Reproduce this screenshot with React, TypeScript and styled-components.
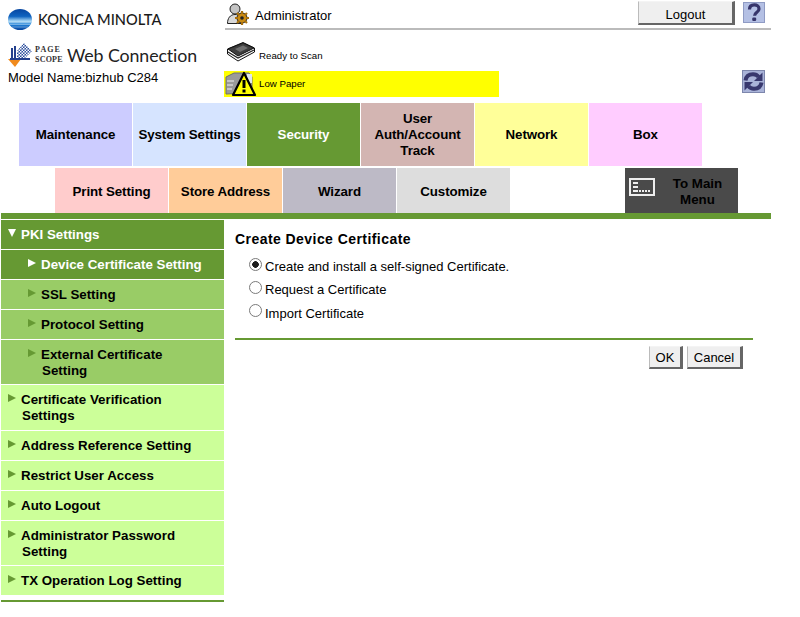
import React from "react";
import styled, { createGlobalStyle } from "styled-components";

const GlobalStyle = createGlobalStyle`
  html, body {
    margin: 0;
    padding: 0;
    background: #fff;
  }
  body {
    font-family: "Liberation Sans", Arial, sans-serif;
    color: #000;
  }
`;

const Page = styled.div`
  width: 800px;
  height: 617px;
  overflow: hidden;
`;

const Header = styled.header`
  display: grid;
  grid-template-columns: 225px 546px;
  height: 103px;
`;

const Brand = styled.div`
  display: flex;
  flex-direction: column;
  padding: 9px 0 0 8px;
`;

const CompanyLogo = styled.div`
  display: flex;
  align-items: center;
  gap: 6px;
  height: 21px;
`;

const CompanyName = styled.span`
  font-family: Lato, sans-serif;
  font-size: 14.6px;
  font-weight: 500;
  color: #1a1a1a;
  white-space: nowrap;
`;

const ProductLogo = styled.div`
  display: flex;
  align-items: center;
  height: 25px;
  margin-top: 12px;
`;

const ScopeWords = styled.div`
  display: flex;
  flex-direction: column;
  width: 27px;
  font-family: "Liberation Serif", serif;
  font-weight: 700;
  font-size: 8px;
  line-height: 10px;
  color: #333;
`;

const ScopeWord = styled.span<{ $spacing: number }>`
  letter-spacing: ${(p) => p.$spacing}px;
`;

const ProductName = styled.span`
  font-family: Lato, sans-serif;
  font-size: 17.8px;
  letter-spacing: -0.1px;
  margin-left: 5px;
  color: #222;
  white-space: nowrap;
`;

const ModelName = styled.div`
  font-size: 13px;
  line-height: 16px;
  margin-top: 3px;
  white-space: nowrap;
`;

const Status = styled.div`
  display: flex;
  flex-direction: column;
`;

const UserBar = styled.div`
  display: flex;
  align-items: center;
  height: 28px;
  padding-left: 2px;
  border-bottom: 2px solid #bbb;
`;

const UserName = styled.span`
  font-size: 13px;
  margin-left: 6px;
  margin-top: 2px;
`;

const PushButton = styled.button<{ $width: number; $height: number; $drop: number }>`
  width: ${(p) => p.$width}px;
  height: ${(p) => p.$height}px;
  padding: ${(p) => p.$drop}px 0 0;
  background: #efefef;
  border-style: solid;
  border-width: 1px 3px 2px 1px;
  border-color: #f4f4f4 #666 #666 #bbb;
  font-family: "Liberation Sans", Arial, sans-serif;
  font-size: 13px;
  color: #000;
`;

const LogoutSlot = styled.div`
  margin-left: auto;
  margin-top: -2px;
`;

const HelpSlot = styled.div`
  display: flex;
  margin: -4px 6px 0 8px;
`;

const DeviceRow = styled.div`
  display: flex;
  align-items: flex-start;
  height: 29px;
  padding: 12px 0 0 2px;
`;

const DeviceLabel = styled.span`
  font-size: 9.7px;
  line-height: 12px;
  margin: 8px 0 0 4px;
`;

const AlertRow = styled.div`
  display: flex;
  align-items: center;
`;

const AlertBox = styled.div`
  display: flex;
  align-items: center;
  width: 275px;
  height: 26px;
  margin-left: -1px;
  padding-left: 1px;
  box-sizing: border-box;
  background: #ffff00;
`;

const AlertLabel = styled.span`
  font-size: 9.7px;
  margin: 0 0 2px 2px;
`;

const RefreshSlot = styled.div`
  display: flex;
  margin: -5px 6px 0 auto;
`;

const TabRow = styled.nav<{ $indent: number; $height: number; $top: number }>`
  display: flex;
  gap: 1px;
  height: ${(p) => p.$height}px;
  margin-top: ${(p) => p.$top}px;
  padding-left: ${(p) => p.$indent}px;
`;

const Tab = styled.div<{ $bg: string; $light?: boolean; $drop: number }>`
  display: flex;
  align-items: center;
  justify-content: center;
  width: 113px;
  box-sizing: border-box;
  padding: ${(p) => p.$drop}px 3px 0;
  text-align: center;
  font-size: 13.33px;
  font-weight: 700;
  line-height: 16px;
  letter-spacing: -0.1px;
  background: ${(p) => p.$bg};
  color: ${(p) => (p.$light ? "#fff" : "#000")};
`;

const MainMenuTab = styled.div`
  display: flex;
  align-items: flex-start;
  width: 113px;
  margin-left: 114px;
  padding: 10px 0 0 4px;
  box-sizing: border-box;
  background: #4a4a4a;
  color: #000;
  font-size: 13.33px;
  font-weight: 700;
  line-height: 16px;
`;

const MainMenuLabel = styled.span`
  flex: 1;
  text-align: center;
  padding-left: 2px;
  margin-top: -2px;
`;

const GreenBar = styled.div`
  width: 770px;
  height: 6px;
  margin-left: 1px;
  background: #669933;
`;

const Body = styled.div`
  display: grid;
  grid-template-columns: 223px 1fr;
  margin-top: 1px;
  padding-left: 1px;
`;

const Side = styled.aside`
  display: flex;
  flex-direction: column;
  gap: 1px;
`;

const SideItem = styled.div<{ $bg: string; $light?: boolean; $indent: number; $tall?: boolean }>`
  display: flex;
  align-items: flex-start;
  box-sizing: border-box;
  min-height: 29px;
  padding: 7px 0 ${(p) => (p.$tall ? 6 : 5)}px ${(p) => p.$indent}px;
  background: ${(p) => p.$bg};
  color: ${(p) => (p.$light ? "#fff" : "#000")};
  font-size: 13.33px;
  font-weight: 700;
  line-height: 16px;
`;

const Arrow = styled.span<{ $down?: boolean; $color: string }>`
  flex: none;
  width: 0;
  height: 0;
  margin-top: 2px;
  margin-right: 5px;
  ${(p) =>
    p.$down
      ? `border-left: 4px solid transparent;
         border-right: 4px solid transparent;
         border-top: 8px solid ${p.$color};`
      : `border-top: 4px solid transparent;
         border-bottom: 4px solid transparent;
         border-left: 8px solid ${p.$color};`}
`;

const SideText = styled.span`
  text-indent: -1px;
  padding-left: 1px;
`;

const SideEnd = styled.div`
  height: 2px;
  margin-top: 4px;
  background: #669933;
`;

const Content = styled.main`
  display: flex;
  flex-direction: column;
  width: 518px;
  margin-left: 11px;
`;

const Title = styled.h2`
  margin: 11px 0 0;
  font-size: 14px;
  line-height: 17px;
  font-weight: 700;
  letter-spacing: 0.44px;
`;

const Options = styled.div`
  display: flex;
  flex-direction: column;
  padding: 7px 0 0 14px;
`;

const OptionRow = styled.label<{ $height: number }>`
  display: flex;
  align-items: center;
  height: ${(p) => p.$height}px;
  font-size: 13px;
`;

const Radio = styled.input`
  appearance: none;
  width: 13px;
  height: 13px;
  margin: -5px 3px 0 0;
  border: 1px solid #7a7a7a;
  border-radius: 50%;
  box-sizing: border-box;
  background: #fff;
  &:checked {
    background: radial-gradient(circle, #1c1c1c 0 3px, #fff 3.6px);
  }
`;

const Rule = styled.div`
  height: 2px;
  margin-top: 13px;
  background: #669933;
`;

const Actions = styled.div`
  display: flex;
  justify-content: flex-end;
  gap: 4px;
  margin: 6px 10px 0 0;
`;

const GlobeIcon = () => (
  <svg width="24" height="21" viewBox="0 0 24 21">
    <defs>
      <linearGradient id="globe" x1="0" y1="0" x2="0" y2="1">
        <stop offset="0" stopColor="#0645a0" />
        <stop offset="0.35" stopColor="#0f63c0" />
        <stop offset="0.58" stopColor="#a9d8f5" />
        <stop offset="0.75" stopColor="#1f7fd6" />
        <stop offset="1" stopColor="#0645a0" />
      </linearGradient>
    </defs>
    <ellipse cx="12" cy="10.5" rx="12" ry="10.5" fill="url(#globe)" />
    <path d="M1 13h22M2 15.5h20M4 18h16" stroke="#fff" strokeWidth="0.6" opacity="0.6" />
  </svg>
);

const PageScopeIcon = () => (
  <svg width="27" height="25" viewBox="0 0 27 25">
    <defs>
      <pattern id="checker" width="3" height="3" patternUnits="userSpaceOnUse">
        <rect width="3" height="3" fill="#2d4f9e" />
        <rect width="1.5" height="1.5" fill="#fff" />
        <rect x="1.5" y="1.5" width="1.5" height="1.5" fill="#fff" />
      </pattern>
    </defs>
    <path d="M0 17 L13 17 L7 25 Z" fill="#f08a1d" />
    <path d="M3 6h2v10H3zM6 4h2v12H6z" fill="#24408e" />
    <path d="M9 9 L16 1 L24 9 L17 16 L9 16 Z" fill="url(#checker)" />
    <path d="M2 16h20v2H2z" fill="#24408e" />
  </svg>
);

const AdminIcon = () => (
  <svg width="22" height="22" viewBox="0 0 22 22">
    <circle cx="8" cy="6" r="5" fill="#c4c4c4" stroke="#222" strokeWidth="1" />
    <path d="M0.5 20.5c0-5 2.5-9 7.5-9s6 2 7 4v5z" fill="#d8d8d8" stroke="#222" strokeWidth="1" />
    <circle cx="15" cy="15" r="5" fill="#c98a12" stroke="#222" strokeWidth="1" />
    <path
      d="M15 8v3M15 19v3M8 15h3M19 15h3M10 10l2 2M18 18l2 2M20 10l-2 2M12 18l-2 2"
      stroke="#a8700c"
      strokeWidth="2.2"
    />
    <circle cx="15" cy="15" r="1.8" fill="#222" />
  </svg>
);

const ScannerIcon = () => (
  <svg width="28" height="20" viewBox="0 0 28 20">
    <path d="M0.5 7 L16 0.5 L27.5 6 L27.5 10 L11 19 L0.5 12 Z" fill="#fff" stroke="#111" strokeWidth="1" />
    <path d="M1 7 L16 1 L27 6 L11 14 Z" fill="#3e3e3e" stroke="#111" strokeWidth="1" />
    <path d="M8 7 L16 3.5 L21 6 L13 10 Z" fill="#6f6f6f" />
    <path d="M1 10 L11 16 L27 8" stroke="#222" strokeWidth="1.2" fill="none" />
  </svg>
);

const WarningIcon = () => (
  <svg width="32" height="26" viewBox="0 0 32 26">
    <path d="M1 6 L9 2 L24 2 L27 6 L27 22 L1 23 Z" fill="#9a9a9a" stroke="#6e6e6e" />
    <path d="M2 10h7M2 14h6M2 18h5" stroke="#d4d4d4" strokeWidth="1.4" />
    <path d="M22 3h5v9h-5z" fill="#dfe7ee" />
    <path d="M19 2 L30 24 L8 24 Z" fill="#ffff00" stroke="#000" strokeWidth="2.2" strokeLinejoin="round" />
    <path d="M19 9v8" stroke="#000" strokeWidth="3" />
    <rect x="17.5" y="18.5" width="3" height="3" fill="#000" />
  </svg>
);

const HelpIcon = () => (
  <svg width="22" height="21" viewBox="0 0 22 21">
    <rect x="0.5" y="0.5" width="21" height="20" fill="#b4c0e4" stroke="#8f9bc4" />
    <path
      d="M6.5 7.5c0-3 2-4.6 4.8-4.6s4.7 1.6 4.7 4c0 3.4-4.4 3.2-4.4 6.8"
      fill="none"
      stroke="#36346a"
      strokeWidth="3.2"
    />
    <rect x="9.2" y="15.5" width="4" height="3.5" rx="1.2" fill="#36346a" />
  </svg>
);

const RefreshIcon = () => (
  <svg width="23" height="23" viewBox="0 0 23 23">
    <rect x="0.5" y="0.5" width="22" height="22" fill="#a9b3d8" stroke="#7d86ac" />
    <path d="M3.5 10.5c.6-4 3.6-6.2 7.5-6.2 2.5 0 4.4 1 5.6 2.6" fill="none" stroke="#38386e" strokeWidth="4" />
    <path d="M20.5 2.5v8.5h-8.5z" fill="#38386e" />
    <path d="M19.5 12.5c-.6 4-3.6 6.2-7.5 6.2-2.5 0-4.4-1-5.6-2.6" fill="none" stroke="#38386e" strokeWidth="4" />
    <path d="M2.5 20.5v-8.500h8.500z" fill="#38386e" />
  </svg>
);

const MainMenuIcon = () => (
  <svg width="26" height="18" viewBox="0 0 26 18">
    <rect x="1" y="1" width="24" height="16" fill="none" stroke="#eee" strokeWidth="2" />
    <path d="M4 4h5v2H4zM4 8h5v2H4zM4 12h5v2H4z" fill="#eee" />
    <path d="M10 12h2v2h-2zM13 12h2v2h-2zM16 12h2v2h-2zM19 12h2v2h-2z" fill="#eee" />
  </svg>
);

const firstTabs = [
  { label: "Maintenance", bg: "#ccccff" },
  { label: "System Settings", bg: "#d6e4ff" },
  { label: "Security", bg: "#669933", light: true },
  { label: "User Auth/Account Track", bg: "#d3b5b2" },
  { label: "Network", bg: "#ffff99" },
  { label: "Box", bg: "#ffccff" },
];

const secondTabs = [
  { label: "Print Setting", bg: "#ffcccc" },
  { label: "Store Address", bg: "#ffcc99" },
  { label: "Wizard", bg: "#bdbac6" },
  { label: "Customize", bg: "#dddddd" },
];

const menu = [
  { lines: ["PKI Settings"], kind: "open" },
  { lines: ["Device Certificate Setting"], kind: "subActive" },
  { lines: ["SSL Setting"], kind: "sub" },
  { lines: ["Protocol Setting"], kind: "sub" },
  { lines: ["External Certificate", "Setting"], kind: "sub" },
  { lines: ["Certificate Verification", "Settings"], kind: "top", tall: true },
  { lines: ["Address Reference Setting"], kind: "top" },
  { lines: ["Restrict User Access"], kind: "top" },
  { lines: ["Auto Logout"], kind: "top" },
  { lines: ["Administrator Password", "Setting"], kind: "top" },
  { lines: ["TX Operation Log Setting"], kind: "top" },
];

const menuStyle: Record<string, { bg: string; indent: number; arrow: string; light?: boolean }> = {
  open: { bg: "#669933", indent: 7, arrow: "#fff", light: true },
  subActive: { bg: "#669933", indent: 27, arrow: "#fff", light: true },
  sub: { bg: "#99cc66", indent: 27, arrow: "#669933" },
  top: { bg: "#ccff99", indent: 7, arrow: "#669933" },
};

const options = [
  { label: "Create and install a self-signed Certificate.", height: 23, checked: true },
  { label: "Request a Certificate", height: 23, checked: false },
  { label: "Import Certificate", height: 24, checked: false },
];

export default function App() {
  return (
    <Page>
      <GlobalStyle />
      <Header>
        <Brand>
          <CompanyLogo>
            <GlobeIcon />
            <CompanyName>KONICA MINOLTA</CompanyName>
          </CompanyLogo>
          <ProductLogo>
            <PageScopeIcon />
            <ScopeWords>
              <ScopeWord $spacing={1.1}>PAGE</ScopeWord>
              <ScopeWord $spacing={0.2}>SCOPE</ScopeWord>
            </ScopeWords>
            <ProductName>Web Connection</ProductName>
          </ProductLogo>
          <ModelName>Model Name:bizhub C284</ModelName>
        </Brand>
        <Status>
          <UserBar>
            <AdminIcon />
            <UserName>Administrator</UserName>
            <LogoutSlot>
              <PushButton $width={97} $height={24} $drop={4}>Logout</PushButton>
            </LogoutSlot>
            <HelpSlot>
              <HelpIcon />
            </HelpSlot>
          </UserBar>
          <DeviceRow>
            <ScannerIcon />
            <DeviceLabel>Ready to Scan</DeviceLabel>
          </DeviceRow>
          <AlertRow>
            <AlertBox>
              <WarningIcon />
              <AlertLabel>Low Paper</AlertLabel>
            </AlertBox>
            <RefreshSlot>
              <RefreshIcon />
            </RefreshSlot>
          </AlertRow>
        </Status>
      </Header>

      <TabRow $indent={19} $height={63} $top={0}>
        {firstTabs.map((t) => (
          <Tab key={t.label} $bg={t.bg} $light={t.light} $drop={0}>
            {t.label}
          </Tab>
        ))}
      </TabRow>
      <TabRow $indent={55} $height={45} $top={2}>
        {secondTabs.map((t) => (
          <Tab key={t.label} $bg={t.bg} $drop={2}>
            {t.label}
          </Tab>
        ))}
        <MainMenuTab>
          <MainMenuIcon />
          <MainMenuLabel>To Main Menu</MainMenuLabel>
        </MainMenuTab>
      </TabRow>
      <GreenBar />

      <Body>
        <Side>
          {menu.map((m) => {
            const s = menuStyle[m.kind];
            return (
              <SideItem key={m.lines[0]} $bg={s.bg} $indent={s.indent} $light={s.light} $tall={m.tall}>
                <Arrow $down={m.kind === "open"} $color={s.arrow} />
                <SideText>
                  {m.lines.map((line, i) => (
                    <React.Fragment key={line}>
                      {i > 0 && <br />}
                      {line}
                    </React.Fragment>
                  ))}
                </SideText>
              </SideItem>
            );
          })}
          <SideEnd />
        </Side>
        <Content>
          <Title>Create Device Certificate</Title>
          <Options>
            {options.map((o) => (
              <OptionRow key={o.label} $height={o.height}>
                <Radio type="radio" name="cert" defaultChecked={o.checked} />
                {o.label}
              </OptionRow>
            ))}
          </Options>
          <Rule />
          <Actions>
            <PushButton $width={34} $height={23} $drop={0}>OK</PushButton>
            <PushButton $width={56} $height={23} $drop={0}>Cancel</PushButton>
          </Actions>
        </Content>
      </Body>
    </Page>
  );
}
